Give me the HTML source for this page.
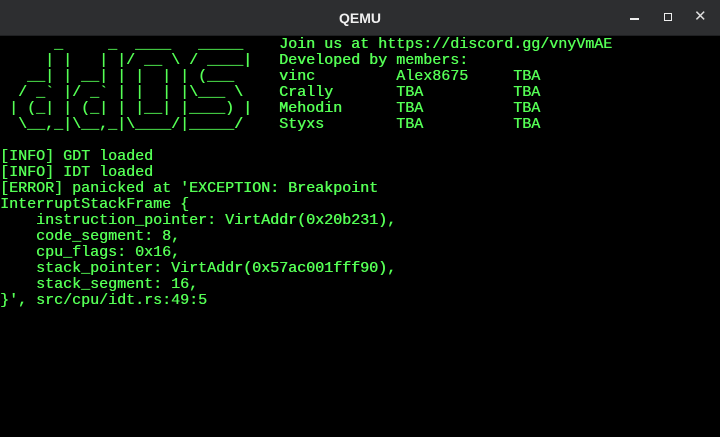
<!DOCTYPE html>
<html><head><meta charset="utf-8">
<style>
html,body{margin:0;padding:0;background:#000;width:720px;height:437px;overflow:hidden}
.bar{position:absolute;left:0;top:0;width:720px;height:36px;background:#2d2e30;border-bottom:1px solid #1f2022;box-sizing:border-box}
.title{position:absolute;left:0;width:720px;top:10px;text-align:center;color:#f0f0f0;font:bold 14px "Liberation Sans",sans-serif}
.min{position:absolute;left:630px;top:18px;width:9px;height:2px;background:#eee}
.max{position:absolute;left:664px;top:13px;width:6px;height:6px;border:1.5px solid #eee}
.x{position:absolute;left:694px;top:7px;color:#ddd;font:15px "DejaVu Sans",sans-serif}
pre{position:absolute;left:0;top:37px;margin:0;color:#55ff55;font:15px/16px "Liberation Mono",monospace;letter-spacing:0;text-shadow:0.4px 0 0 #55ff55}
</style></head><body>
<div class="bar"><div class="title">QEMU</div><div class="min"></div><div class="max"></div><div class="x">✕</div></div>
<pre>      _     _  ____   _____    Join us at https://discord.gg/vnyVmAE
     | |   | |/ __ \ / ____|   Developed by members:
   __| | __| | |  | | (___     vinc         Alex8675     TBA
  / _` |/ _` | |  | |\___ \    Crally       TBA          TBA
 | (_| | (_| | |__| |____) |   Mehodin      TBA          TBA
  \__,_|\__,_|\____/|_____/    Styxs        TBA          TBA

[INFO] GDT loaded
[INFO] IDT loaded
[ERROR] panicked at 'EXCEPTION: Breakpoint
InterruptStackFrame {
    instruction_pointer: VirtAddr(0x20b231),
    code_segment: 8,
    cpu_flags: 0x16,
    stack_pointer: VirtAddr(0x57ac001fff90),
    stack_segment: 16,
}', src/cpu/idt.rs:49:5</pre>
</body></html>
